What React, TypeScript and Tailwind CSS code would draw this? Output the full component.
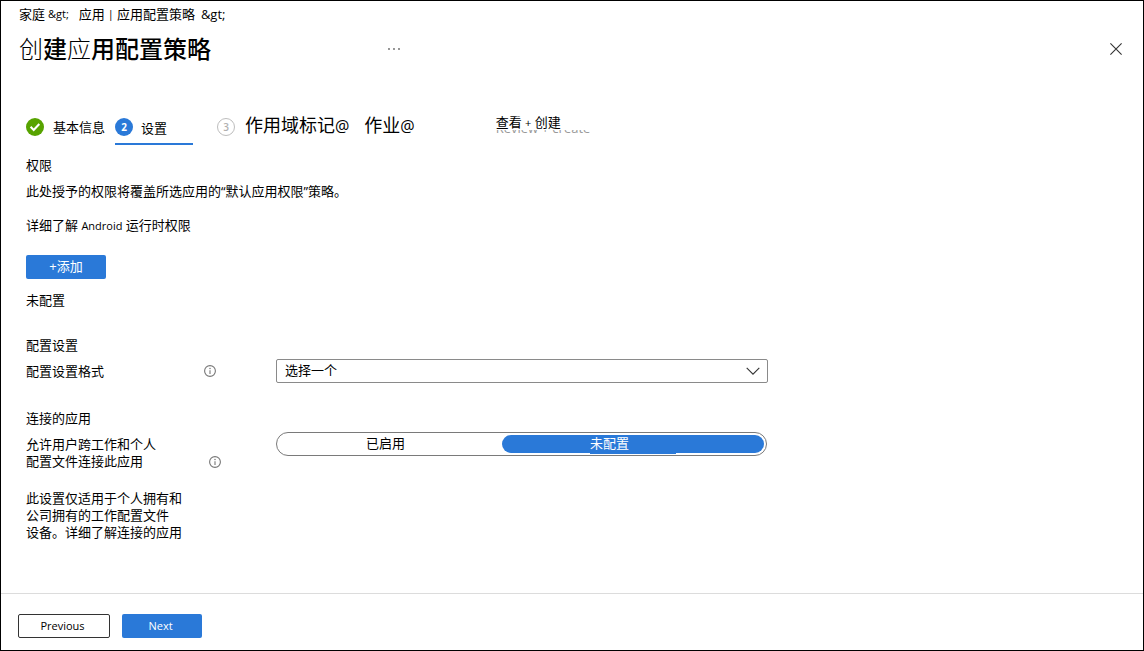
import { useState, type ReactNode } from "react";

function InfoIcon() {
  return (
    <svg viewBox="0 0 12 12" className="h-3 w-3 shrink-0" fill="none" aria-hidden="true">
      <circle cx="6" cy="6" r="5.4" stroke="#777777" strokeWidth="1.1" />
      <path d="M6 5.2V9" stroke="#777777" strokeWidth="1.1" />
      <circle cx="6" cy="3.4" r="0.75" fill="#777777" />
    </svg>
  );
}

function CheckBadge() {
  return (
    <svg viewBox="0 0 18 18" className="h-[18px] w-[18px] shrink-0" aria-hidden="true">
      <circle cx="9" cy="9" r="9" fill="#57a300" />
      <path d="M4.6 8.8l3.1 3.1 5.6-5.8" stroke="#ffffff" strokeWidth="2.1" fill="none" />
    </svg>
  );
}

function NumberBadge({ value, active = false }: { value: number; active?: boolean }) {
  return (
    <span
      className={
        active
          ? "flex h-[18px] w-[18px] shrink-0 items-center justify-center rounded-full bg-[#2a79d8] text-[10px] font-bold text-white"
          : "flex h-[18px] w-[18px] shrink-0 items-center justify-center rounded-full border border-[#bdbdbd] text-[10px] font-semibold text-[#b0b0b0]"
      }
    >
      {value}
    </span>
  );
}

function Segment({
  name,
  checked,
  onSelect,
  className,
  children,
}: {
  name: string;
  checked: boolean;
  onSelect: () => void;
  className: string;
  children: ReactNode;
}) {
  return (
    <label
      className={`flex cursor-pointer items-start justify-center rounded-full leading-4 ${className} ${
        checked ? "bg-[#2a79d8] text-white" : "text-black"
      }`}
    >
      <input type="radio" name={name} checked={checked} onChange={onSelect} className="sr-only" />
      {children}
    </label>
  );
}

export default function App() {
  const [connected, setConnected] = useState(false);

  return (
    <div
      lang="zh-CN"
      className="flex min-h-screen flex-col border border-black bg-white font-['Open_Sans','Noto_Sans_CJK_SC',sans-serif] text-[13px] leading-[18px] text-black"
    >
      <header className="pr-[19px] pl-[18px]">
        <nav aria-label="导航路径" className="flex items-center pt-1">
          <a href="#home">家庭</a>
          <span className="ml-[3px] text-[11px] leading-[18px]">&amp;gt;</span>
          <a href="#apps" className="ml-[10px]">应用</a>
          <span className="mx-[3px] text-[11px] leading-4">|</span>
          <a href="#policies">应用配置策略</a>
          <span className="ml-[6px] text-[13px] leading-[18px]">&amp;gt;</span>
        </nav>
        <div className="flex items-center pt-[10px]">
          <h1 className="text-2xl leading-8 font-medium">
            <span className="font-light">创</span>建<span className="font-light">应</span>用配置策略
          </h1>
          <button type="button" aria-label="更多" className="ml-[175px] flex h-4 w-4 items-center justify-center">
            <svg viewBox="0 0 12 2" className="h-[2px] w-3" fill="#666666" aria-hidden="true">
              <circle cx="1" cy="1" r="0.9" />
              <circle cx="6" cy="1" r="0.9" />
              <circle cx="11" cy="1" r="0.9" />
            </svg>
          </button>
          <button type="button" aria-label="关闭" className="ml-auto flex h-4 w-4 items-center justify-center">
            <svg viewBox="0 0 12 12" className="h-3 w-3" stroke="#333333" strokeWidth="1.1" aria-hidden="true">
              <path d="M0.4 0.4L11.6 11.6M11.6 0.4L0.4 11.6" />
            </svg>
          </button>
        </div>
      </header>

      <main className="flex-1 pr-5 pl-[25px]">
        <ol className="mt-[50px] flex h-8 items-start">
          <li className="flex h-6 items-center gap-[9px]">
            <CheckBadge />
            基本信息
          </li>
          <li aria-current="step" className="ml-[10px] flex h-[30px] w-[78px] items-start border-b-2 border-[#2a79d8]">
            <span className="flex h-6 items-center gap-2">
              <NumberBadge value={2} active />
              <span className="pt-[2px]">设置</span>
            </span>
          </li>
          <li className="ml-6 flex h-6 items-center gap-[10px]">
            <NumberBadge value={3} />
            <span className="pb-[3px] text-lg leading-[21px]">
              作用域标记<span className="text-base leading-[21px]">@</span>
            </span>
          </li>
          <li className="ml-[15px] flex h-6 items-center">
            <span className="pb-[3px] text-lg leading-[21px]">
              作业<span className="text-base leading-[21px]">@</span>
            </span>
          </li>
          <li className="ml-[81px]">
            <span className="block leading-[15px]">
              查看 <span className="text-[11px]">+</span> 创建
            </span>
            <span aria-hidden="true" className="flex h-[3px] items-end overflow-hidden leading-[10px] text-[#999999]">
              Review + create
            </span>
          </li>
        </ol>

        <section>
          <h2 className="mt-[9px]">权限</h2>
          <p className="mt-2">此处授予的权限将覆盖所选应用的“默认应用权限”策略。</p>
          <a href="#android-permissions" className="mt-4 block w-fit">
            详细了解 <span className="text-[11px]">Android</span> 运行时权限
          </a>
          <button
            type="button"
            className="mt-5 flex h-6 w-20 items-center justify-center rounded-[2px] bg-[#2a79d8] pb-[2px] text-white"
          >
            +添加
          </button>
          <p className="mt-3">未配置</p>
        </section>

        <section className="mt-[27px]">
          <h2>配置设置</h2>
          <div className="mt-[5px] flex items-center">
            <div className="flex w-[250px] shrink-0 items-center">
              <label htmlFor="format" className="w-[178px]">配置设置格式</label>
              <InfoIcon />
            </div>
            <div className="relative w-full max-w-[492px]">
              <select
                id="format"
                className="block h-6 w-full appearance-none rounded-[2px] border border-[#8a8a8a] bg-white pr-8 pb-[2px] pl-2 leading-[18px]"
              >
                <option>选择一个</option>
              </select>
              <svg
                viewBox="0 0 14 8"
                className="pointer-events-none absolute top-2 right-2 h-2 w-[14px]"
                fill="none"
                stroke="#333333"
                strokeWidth="1.1"
                aria-hidden="true"
              >
                <path d="M0.7 0.8L7 7.1L13.3 0.8" />
              </svg>
            </div>
          </div>
        </section>

        <section className="mt-[26px]">
          <h2>连接的应用</h2>
          <div className="mt-[5px] flex items-start">
            <div className="flex w-[250px] shrink-0 items-end pt-1">
              <p id="connect-label" className="w-[183px] leading-[17px]">
                允许用户跨工作和个人
                <br />
                配置文件连接此应用
              </p>
              <span className="flex pb-[2px]">
                <InfoIcon />
              </span>
            </div>
            <div
              role="radiogroup"
              aria-labelledby="connect-label"
              className="flex h-6 w-full max-w-[491px] rounded-full border border-[#7a7a7a] p-[2px]"
            >
              <Segment name="connect" checked={connected} onSelect={() => setConnected(true)} className="w-[46%]">
                <span className="pr-[10px]">已启用</span>
              </Segment>
              <Segment name="connect" checked={!connected} onSelect={() => setConnected(false)} className="w-[54%]">
                <span className={connected ? "w-[86px]" : "h-[19px] w-[86px] bg-[#2a79d8]"}>未配置</span>
              </Segment>
            </div>
          </div>
          <p className="mt-5 leading-[17px]">
            此设置仅适用于个人拥有和
            <br />
            公司拥有的工作配置文件
            <br />
            设备。<a href="#connected-apps">详细了解连接的应用</a>
          </p>
        </section>
      </main>

      <footer className="flex gap-3 border-t border-[#dcdcdc] px-[17px] pt-5 pb-3 text-[11px]">
        <button type="button" className="h-6 w-[92px] rounded-[2px] border border-[#333333] bg-white pr-[3px]">
          Previous
        </button>
        <button type="button" className="h-6 w-20 rounded-[2px] bg-[#2a79d8] pr-[3px] text-white">
          Next
        </button>
      </footer>
    </div>
  );
}
